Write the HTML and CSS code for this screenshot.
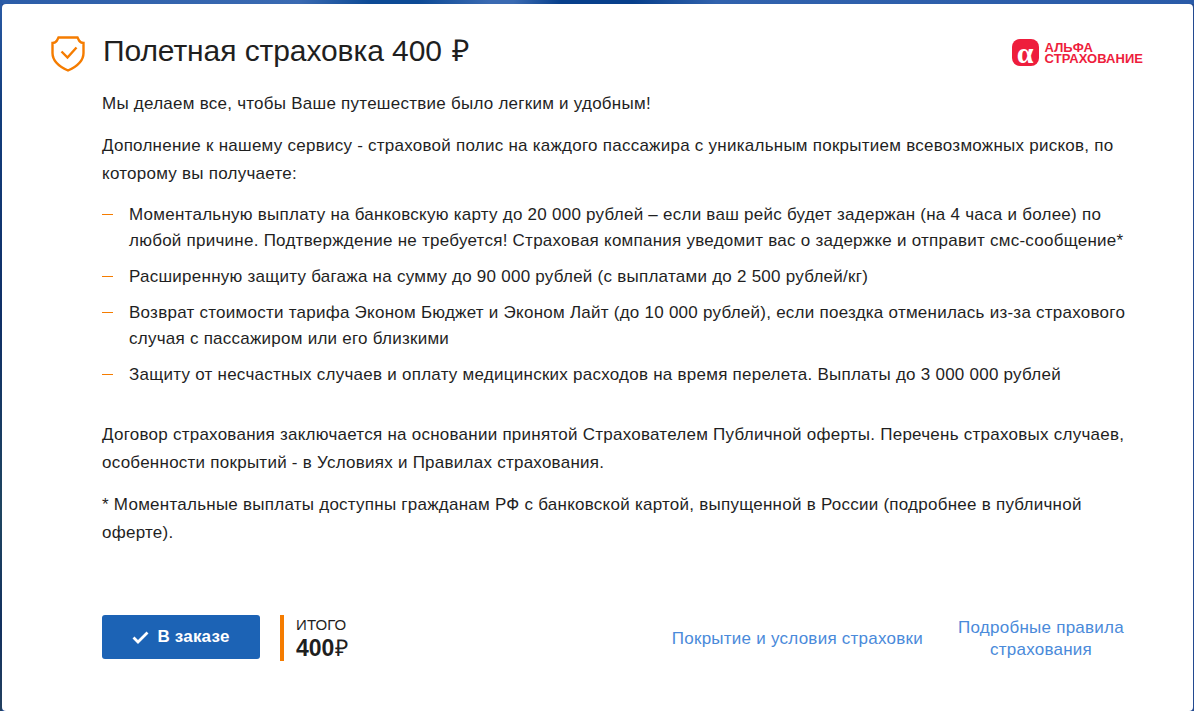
FILE: index.html
```html
<!DOCTYPE html>
<html lang="ru">
<head>
<meta charset="utf-8">
<title>Полетная страховка</title>
<link rel="stylesheet" href="styles.css">
</head>
<body>
<main class="card">
  <header class="head">
    <svg class="shield" width="34" height="36" viewBox="0 0 34 36" fill="none" stroke="#f57c00" stroke-width="2.400">
      <path d="M7.500 1.500H26.500L28 4.500C29 6 30.500 7 32.500 7V17C32.500 25 26 30.500 17 34.500C8 30.500 1.500 25 1.500 17V7C3.500 7 5 6 6 4.500Z"/>
      <path d="M10.500 15.500L16.500 21.500L25.500 11.500"/>
    </svg>
    <h1 class="title">Полетная страховка 400 <span class="rub">₽</span></h1>
    <div class="logo">
      <span class="logo-mark">α</span>
      <div class="logo-text"><span>АЛЬФА</span><span>СТРАХОВАНИЕ</span></div>
    </div>
  </header>
  <div class="body">
    <p>Мы делаем все, чтобы Ваше путешествие было легким и удобным!</p>
    <p>Дополнение к нашему сервису - страховой полис на каждого пассажира с уникальным покрытием всевозможных рисков, по которому вы получаете:</p>
    <ul class="list">
      <li>Моментальную выплату на банковскую карту до 20 000 рублей – если ваш рейс будет задержан (на 4 часа и более) по любой причине. Подтверждение не требуется! Страховая компания уведомит вас о задержке и отправит смс-сообщение*</li>
      <li>Расширенную защиту багажа на сумму до 90 000 рублей (с выплатами до 2 500 рублей/кг)</li>
      <li>Возврат стоимости тарифа Эконом Бюджет и Эконом Лайт (до 10 000 рублей), если поездка отменилась из-за страхового случая с пассажиром или его близкими</li>
      <li>Защиту от несчастных случаев и оплату медицинских расходов на время перелета. Выплаты до 3 000 000 рублей</li>
    </ul>
    <p>Договор страхования заключается на основании принятой Страхователем Публичной оферты. Перечень страховых случаев, особенности покрытий - в Условиях и Правилах страхования.</p>
    <p>* Моментальные выплаты доступны гражданам РФ с банковской картой, выпущенной в России (подробнее в публичной оферте).</p>
  </div>
  <footer class="foot">
    <button class="btn" type="button">
      <svg width="17" height="13" viewBox="0 0 17 13" fill="none" stroke="#fff" stroke-width="2.800"><path d="M1.500 6.500L6 11L15.500 1.500"/></svg>
      В заказе
    </button>
    <div class="total">
      <div class="total-label">ИТОГО</div>
      <div class="total-sum">400<span class="total-rub">₽</span></div>
    </div>
    <nav class="links">
      <a class="link" href="#">Покрытие и условия страховки</a>
      <a class="link link-wrap" href="#">Подробные правила страхования</a>
    </nav>
  </footer>
</main>
</body>
</html>
```
FILE: styles.css
```css
* { box-sizing: border-box; }
html, body { height: 100%; }
body {
  margin: 0;
  padding: 4px 1px 0 2px;
  overflow: hidden;
  background:
    linear-gradient(180deg, #2a5ba6 0%, #123d7c 15%, #0f2f66 45%, #1f4560 72%, #12305f 88%, #23405f 100%) left top / 2px 100% no-repeat,
    linear-gradient(90deg, #2c5da8 0%, #3a6ab2 25%, #0d4a95 31%, #0d4a95 35%, #3a6ab2 41%, #3a6ab2 43%, #073f8b 47%, #073f8b 53%, #3162ad 60%, #2a5ba8 100%) left top / 100% 4px no-repeat,
    #234a90;
  font-family: "Liberation Sans", Arial, sans-serif;
  color: #1f1f1f;
}
.card {
  background: #fff;
  border-radius: 4px;
  height: 707px;
  padding: 27px 50px 0 49px;
  display: flex;
  flex-direction: column;
}
.head { display: flex; align-items: flex-start; }
.shield { margin-top: 5px; margin-right: 18px; flex: none; }
.title { margin: 0; font-size: 30px; line-height: 40px; font-weight: 400; letter-spacing: -0.08px; flex: 1; }
.rub { margin-left: 2px; }
.logo { display: flex; align-items: center; gap: 6px; margin-top: 8px; }
.logo-mark { width: 27px; height: 27px; border-radius: 8px; background: #ee1d3c; color: #fff; display: flex; align-items: center; justify-content: center; font: 700 30px/27px "Liberation Serif", serif; }
.logo-text { display: flex; flex-direction: column; color: #ee1d3c; font-weight: 700; font-size: 13px; line-height: 11px; letter-spacing: 0.05px; }
.body { margin-left: 51px; width: 1026px; font-size: 17px; letter-spacing: 0.25px; line-height: 28px; padding-top: 18px; }
.body p { margin: 0 0 14px; }
.list { list-style: none; margin: 0 0 33px; padding: 0; line-height: 26px; }
.list li { position: relative; padding-left: 27px; margin-bottom: 10px; }
.list li::before { content: ""; position: absolute; left: 0; top: 12px; width: 11px; height: 1px; background: #f57c00; }
.foot { margin-top: auto; margin-left: 51px; margin-bottom: 50px; display: flex; align-items: flex-start; }
.btn { width: 158px; height: 44px; background: #1c63b5; color: #fff; border: 0; border-radius: 3px; font: 700 17px "Liberation Sans", sans-serif; letter-spacing: 0.2px; display: flex; align-items: center; justify-content: center; gap: 8px; }
.total { margin-left: 20px; border-left: 4px solid #f57c00; padding-left: 12px; height: 46px; }
.total-label { font-size: 15px; line-height: 20px; letter-spacing: 0.1px; }
.total-sum { font-size: 23px; line-height: 26px; font-weight: 700; }
.total-rub { font-weight: 400; margin-left: 1px; }
.links { margin-left: auto; display: flex; align-items: center; gap: 33px; margin-right: 17px; padding-top: 2px; }
.link { color: #4a8ada; font-size: 17px; letter-spacing: 0.25px; line-height: 22px; text-decoration: none; text-align: center; }
.link-wrap { width: 170px; }
```
